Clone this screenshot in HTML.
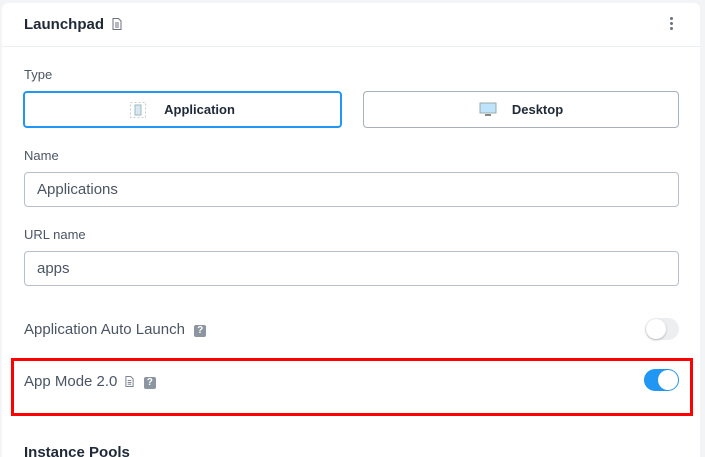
<!DOCTYPE html>
<html><head><style>
*{box-sizing:border-box;margin:0;padding:0}
html,body{width:705px;height:457px;overflow:hidden}
body{background:#f3f4f6;font-family:"Liberation Sans",sans-serif;position:relative}
.card{position:absolute;left:2px;top:3px;width:698px;height:454px;background:#fff;border-radius:6px 6px 0 0}
.a{position:absolute}
.hdr{left:2px;top:46px;width:698px;height:1px;background:#eceef1}
.lbl{font-size:13px;color:#4b5563}
.btn{border:1px solid #a8b0ba;border-radius:4px;height:37px;font-size:13px;font-weight:bold;color:#1f2937;display:flex;align-items:center;justify-content:center}
.inp{left:24px;width:655px;height:35px;border:1px solid #b8bfc8;border-radius:4px;font-size:15px;color:#4b5563;padding-left:12px;line-height:33px}
.big{font-size:15px;color:#4b5563}
.q{display:inline-block;width:12px;height:12px;background:#8c95a0;color:#fff;font-size:10px;font-weight:bold;text-align:center;line-height:12px;border-radius:2px;vertical-align:1px}
</style></head><body>
<div class="card"></div>
<div class="a" style="left:24px;top:16px;font-size:15px;font-weight:bold;color:#1f2937">Launchpad
<svg width="10" height="12" viewBox="0 0 10 12" style="margin-left:4px;vertical-align:-1px"><path d="M1 .5h5.5l2.5 2.5v8.5H1z" fill="none" stroke="#6b7280"/><path d="M3 5h4M3 7h4M3 9h4" stroke="#6b7280"/></svg></div>
<div class="a" style="left:670px;top:17px;width:3px">
<div style="width:3px;height:3px;background:#6b7280;border-radius:2px;margin-bottom:2px"></div><div style="width:3px;height:3px;background:#6b7280;border-radius:2px;margin-bottom:2px"></div><div style="width:3px;height:3px;background:#6b7280;border-radius:2px"></div></div>
<div class="a hdr"></div>
<div class="a lbl" style="left:24px;top:67px">Type</div>
<div class="a btn" style="left:23px;top:91px;width:319px;border:2px solid #2196f3"><svg width="16" height="16" viewBox="0 0 16 16" style="margin-right:18px"><rect x=".5" y=".5" width="15" height="15" fill="none" stroke="#c8ccd2" stroke-dasharray="2 2"/><rect x="5" y="3" width="6" height="10" fill="#dbe6f5" stroke="#9bb"/></svg>Application</div>
<div class="a btn" style="left:363px;top:91px;width:316px"><svg width="18" height="15" viewBox="0 0 18 15" style="margin-right:15px"><rect x="1" y="1" width="16" height="10" fill="#bfe3fb" stroke="#9aa"/><rect x="6" y="12" width="6" height="2" fill="#888"/></svg>Desktop</div>
<div class="a lbl" style="left:24px;top:148px">Name</div>
<div class="a inp" style="top:172px">Applications</div>
<div class="a lbl" style="left:24px;top:227px">URL name</div>
<div class="a inp" style="top:251px">apps</div>
<div class="a big" style="left:24px;top:321px">Application Auto Launch <span class="q" style="margin-left:5px">?</span></div>
<div class="a" style="left:645px;top:318px;width:34px;height:22px;border-radius:11px;background:#eceef0"><div style="position:absolute;left:1px;top:1px;width:20px;height:20px;border-radius:10px;background:#fff;box-shadow:0 1px 2px rgba(0,0,0,.25)"></div></div>
<div class="a" style="left:11px;top:358px;width:682px;height:58px;border:3px solid #f00"></div>
<div class="a big" style="left:24px;top:373px">App Mode 2.0 <svg width="9" height="11" viewBox="0 0 10 12" style="margin-left:3px;vertical-align:-1px"><path d="M1 .5h5.5l2.5 2.5v8.5H1z" fill="none" stroke="#6b7280"/><path d="M3 5h4M3 7h4M3 9h4" stroke="#6b7280"/></svg> <span class="q" style="margin-left:6px">?</span></div>
<div class="a" style="left:644px;top:369px;width:35px;height:22px;border-radius:11px;background:#2196f3"><div style="position:absolute;right:1px;top:1px;width:20px;height:20px;border-radius:10px;background:#fff"></div></div>
<div class="a" style="left:24px;top:444px;font-size:15px;font-weight:bold;color:#1f2937">Instance Pools</div>
</body></html>
